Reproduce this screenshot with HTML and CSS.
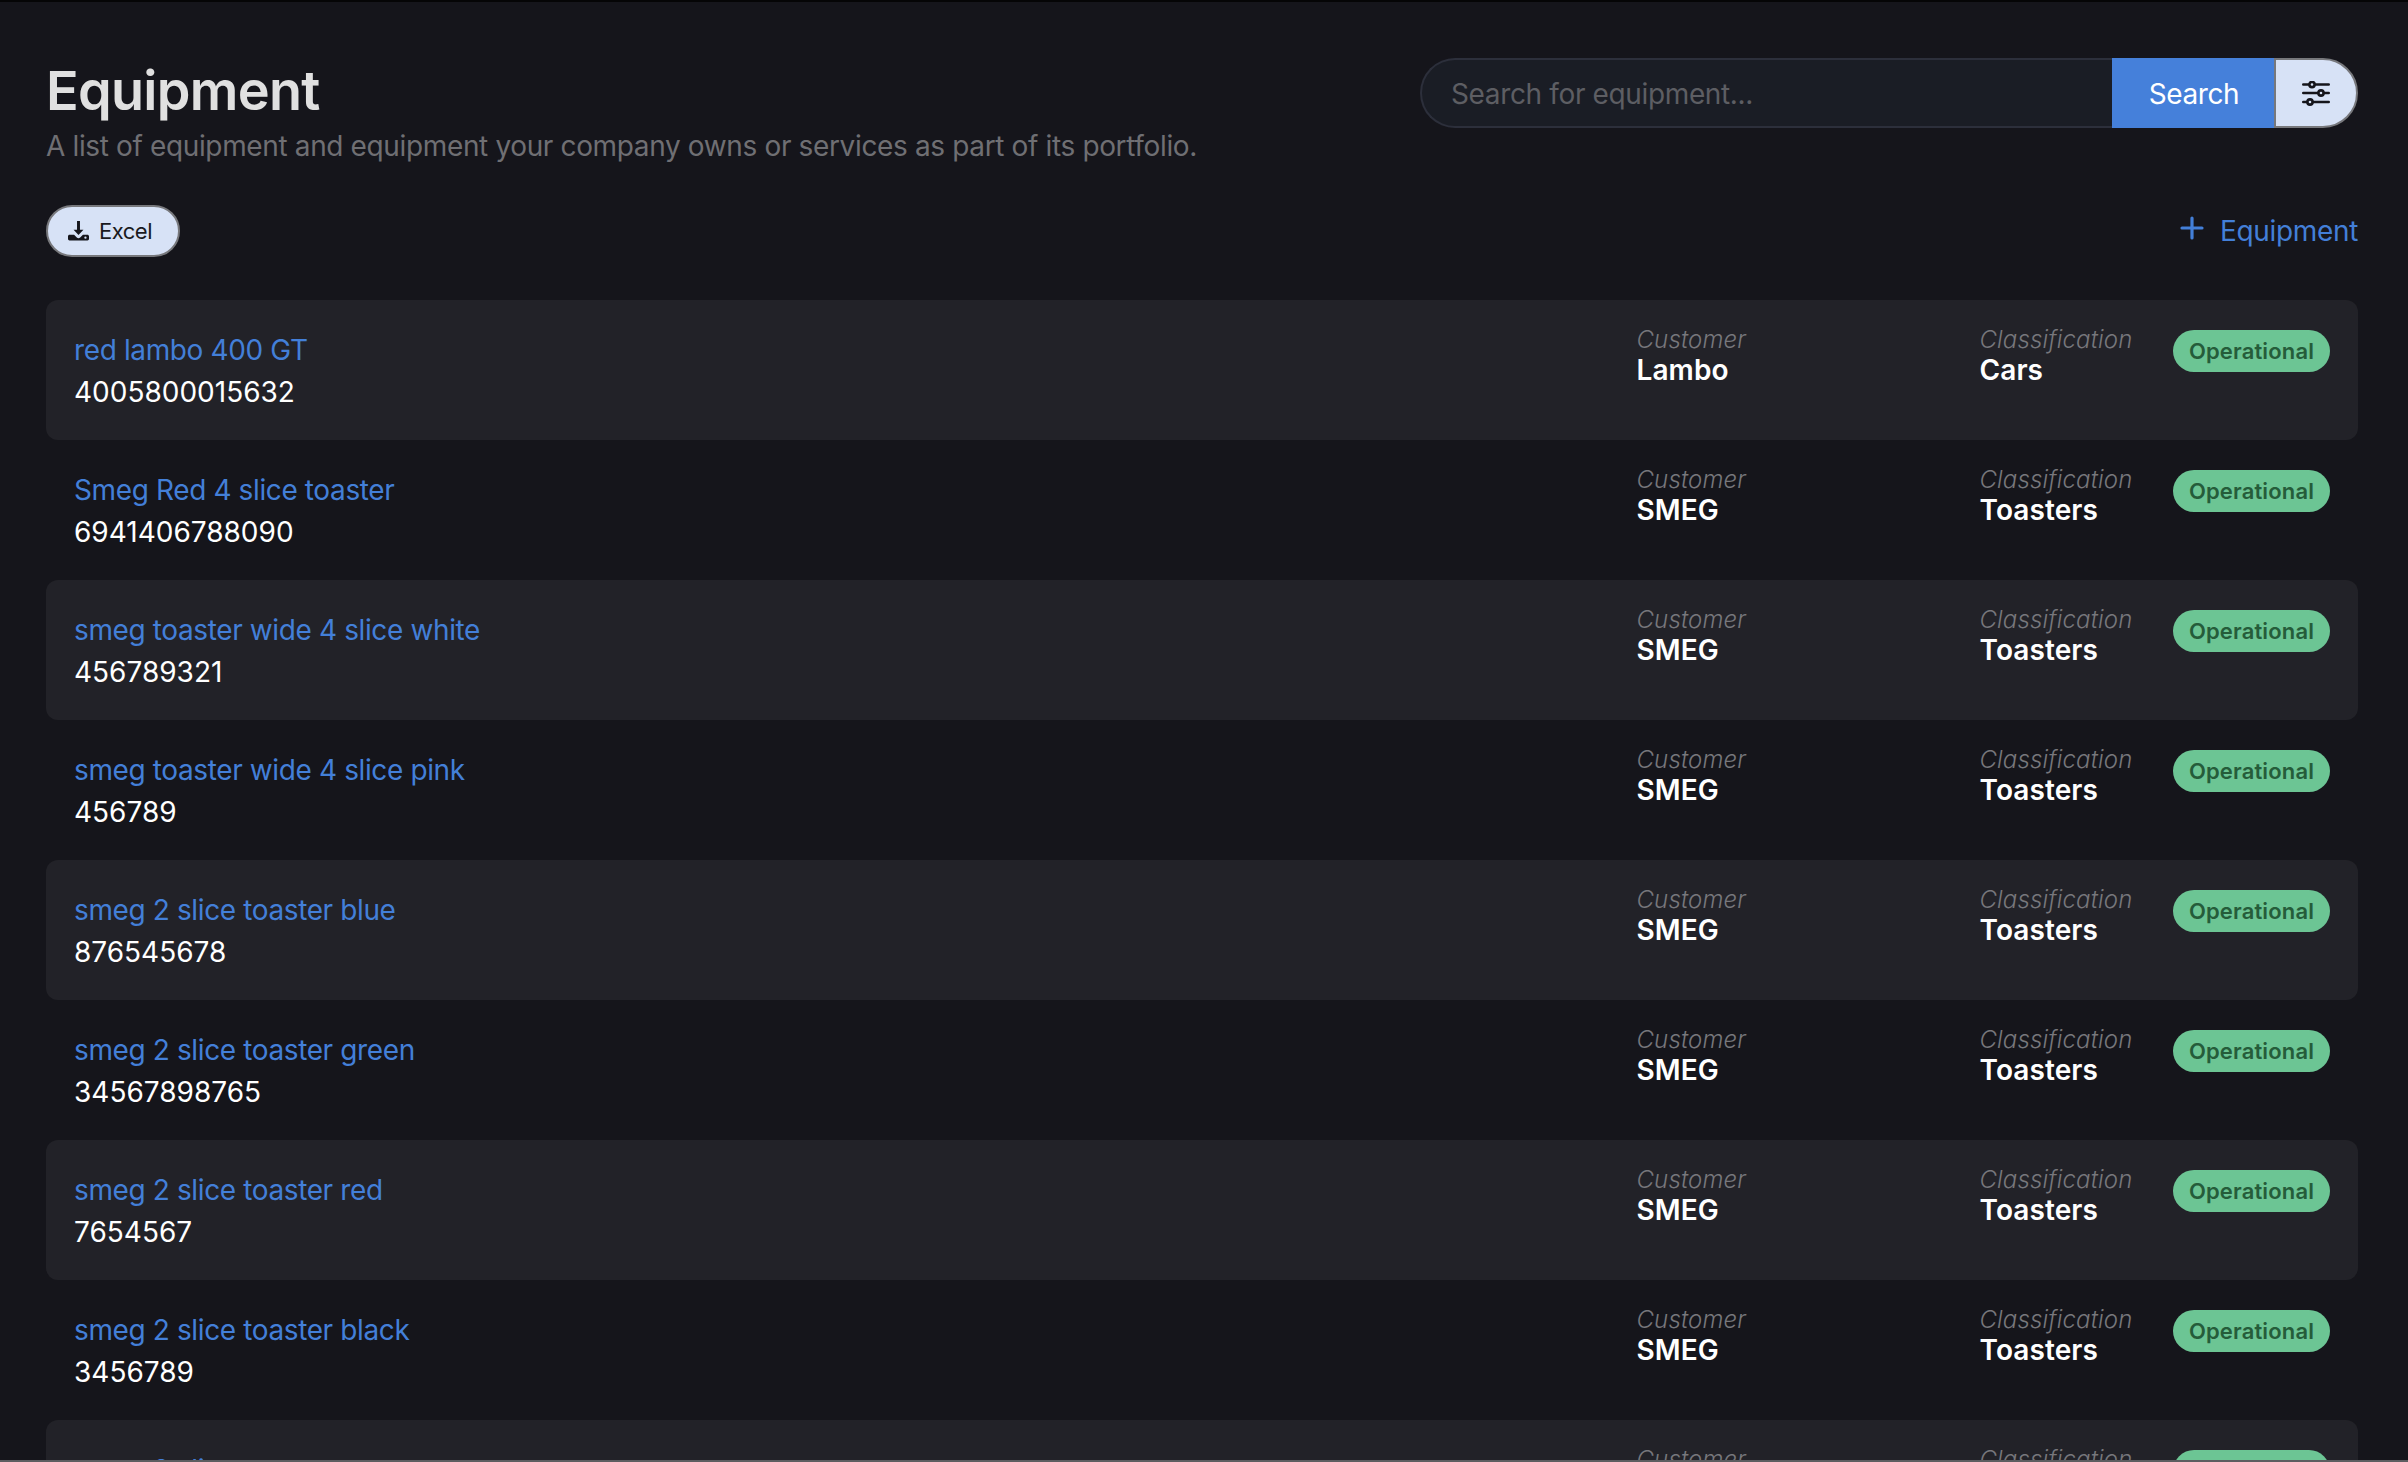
FILE: index.html
```html
<!DOCTYPE html>
<html lang="en">
<head>
<meta charset="utf-8">
<title>Equipment</title>
<link rel="stylesheet" href="styles.css">
</head>
<body>
<div class="page">
  <header class="head">
    <div class="head-text">
      <h1 class="title">Equipment</h1>
      <p class="subtitle">A list of equipment and equipment your company owns or services as part of its portfolio.</p>
    </div>
    <form class="search">
      <input class="search-input" type="text" placeholder="Search for equipment...">
      <button class="search-btn" type="button">Search</button>
      <button class="filter-btn" type="button" aria-label="Filters">
        <svg class="filter-icon" viewBox="0 0 28 25" fill="none" stroke="#15151b" stroke-width="2.6" stroke-linecap="round">
          <path d="M1.3 3.5h25.4M1.3 12h25.4M1.3 21h25.4"/>
          <circle cx="10" cy="3.5" r="2.6" fill="#d7e2f6"/>
          <circle cx="19" cy="12" r="2.6" fill="#d7e2f6"/>
          <circle cx="8" cy="21" r="2.6" fill="#d7e2f6"/>
        </svg>
      </button>
    </form>
  </header>
  <div class="tools">
    <button class="excel" type="button">
      <svg class="excel-icon" viewBox="0 0 20 20">
        <path d="M8.6 1h2.8v8.2h3.3L10 14.4 5.3 9.2h3.3z" fill="#15151b"/>
        <path d="M1.4 14h4.4l2.6 2.6a2.3 2.3 0 0 0 3.2 0L14.2 14h4.4c.6 0 1.4.6 1.4 1.4v2.8c0 .8-.7 1.4-1.4 1.4H1.4C.7 19.6 0 19 0 18.2v-2.8C0 14.6.7 14 1.4 14z" fill="#15151b"/>
        <circle cx="16.6" cy="16.8" r="1.1" fill="#d7e2f6"/>
      </svg>
      <span>Excel</span>
    </button>
    <a class="add" href="#">
      <svg class="add-icon" viewBox="0 0 24 24" fill="none" stroke="#437fd8" stroke-width="3.2" stroke-linecap="round"><path d="M12 2v20M2 12h20"/></svg>
      <span>Equipment</span>
    </a>
  </div>
  <main class="list">
    <article class="row">
      <div class="main-cell"><a class="name" href="#">red lambo 400 GT</a><div class="serial">4005800015632</div></div>
      <div class="meta customer"><div class="label">Customer</div><div class="value">Lambo</div></div>
      <div class="meta class-cell"><div class="label">Classification</div><div class="value">Cars</div></div>
      <span class="badge">Operational</span>
    </article>
    <article class="row">
      <div class="main-cell"><a class="name" href="#">Smeg Red 4 slice toaster</a><div class="serial">6941406788090</div></div>
      <div class="meta customer"><div class="label">Customer</div><div class="value">SMEG</div></div>
      <div class="meta class-cell"><div class="label">Classification</div><div class="value">Toasters</div></div>
      <span class="badge">Operational</span>
    </article>
    <article class="row">
      <div class="main-cell"><a class="name" href="#">smeg toaster wide 4 slice white</a><div class="serial">456789321</div></div>
      <div class="meta customer"><div class="label">Customer</div><div class="value">SMEG</div></div>
      <div class="meta class-cell"><div class="label">Classification</div><div class="value">Toasters</div></div>
      <span class="badge">Operational</span>
    </article>
    <article class="row">
      <div class="main-cell"><a class="name" href="#">smeg toaster wide 4 slice pink</a><div class="serial">456789</div></div>
      <div class="meta customer"><div class="label">Customer</div><div class="value">SMEG</div></div>
      <div class="meta class-cell"><div class="label">Classification</div><div class="value">Toasters</div></div>
      <span class="badge">Operational</span>
    </article>
    <article class="row">
      <div class="main-cell"><a class="name" href="#">smeg 2 slice toaster blue</a><div class="serial">876545678</div></div>
      <div class="meta customer"><div class="label">Customer</div><div class="value">SMEG</div></div>
      <div class="meta class-cell"><div class="label">Classification</div><div class="value">Toasters</div></div>
      <span class="badge">Operational</span>
    </article>
    <article class="row">
      <div class="main-cell"><a class="name" href="#">smeg 2 slice toaster green</a><div class="serial">34567898765</div></div>
      <div class="meta customer"><div class="label">Customer</div><div class="value">SMEG</div></div>
      <div class="meta class-cell"><div class="label">Classification</div><div class="value">Toasters</div></div>
      <span class="badge">Operational</span>
    </article>
    <article class="row">
      <div class="main-cell"><a class="name" href="#">smeg 2 slice toaster red</a><div class="serial">7654567</div></div>
      <div class="meta customer"><div class="label">Customer</div><div class="value">SMEG</div></div>
      <div class="meta class-cell"><div class="label">Classification</div><div class="value">Toasters</div></div>
      <span class="badge">Operational</span>
    </article>
    <article class="row">
      <div class="main-cell"><a class="name" href="#">smeg 2 slice toaster black</a><div class="serial">3456789</div></div>
      <div class="meta customer"><div class="label">Customer</div><div class="value">SMEG</div></div>
      <div class="meta class-cell"><div class="label">Classification</div><div class="value">Toasters</div></div>
      <span class="badge">Operational</span>
    </article>
    <article class="row">
      <div class="main-cell"><a class="name" href="#">smeg 2 slice toaster</a><div class="serial">3456789</div></div>
      <div class="meta customer"><div class="label">Customer</div><div class="value">SMEG</div></div>
      <div class="meta class-cell"><div class="label">Classification</div><div class="value">Toasters</div></div>
      <span class="badge">Operational</span>
    </article>
  </main>
</div>
<div class="bottom-edge"></div>
</body>
</html>
```
FILE: styles.css
```css
* { box-sizing: border-box; }
html, body { margin: 0; height: 100%; overflow: hidden; }
body {
  background: #15151b;
  font-family: Inter, "Liberation Sans", sans-serif;
  color: #fff;
}
.page {
  border-top: 2px solid #050506;
  padding: 56px 50px 0 46px;
}
.head {
  display: flex;
  justify-content: space-between;
  align-items: flex-start;
}
.title {
  margin: 0;
  font-size: 54px;
  line-height: 66px;
  font-weight: 600;
  color: #e0e0e0;
  letter-spacing: -0.7px;
}
.subtitle {
  margin: 2px 0 0;
  font-size: 28px;
  line-height: 40px;
  font-weight: 400;
  color: #6f6f73;
  letter-spacing: -0.36px;
}
.search {
  display: flex;
  height: 70px;
  width: 938px;
  margin: 0;
}
.search-input {
  flex: 1;
  min-width: 0;
  height: 70px;
  padding: 2px 30px 0 29px;
  background: #1a1d25;
  border: 2px solid #2c2f3b;
  border-right: 0;
  border-radius: 35px 0 0 35px;
  font: 400 28px Inter, "Liberation Sans", sans-serif;
  letter-spacing: -0.36px;
  color: #fff;
  outline: none;
}
.search-input::placeholder { color: #5d5e63; opacity: 1; }
.search-btn {
  width: 162px;
  height: 70px;
  padding: 2px 0 0 2px;
  border: 0;
  background: #4580da;
  color: #fff;
  font: 400 28px Inter, "Liberation Sans", sans-serif;
  letter-spacing: -0.4px;
}
.filter-btn {
  width: 84px;
  height: 70px;
  padding: 0;
  display: flex;
  align-items: center;
  justify-content: center;
  background: #d7e2f6;
  border: 2px solid #77787c;
  border-radius: 0 35px 35px 0;
}
.filter-icon { width: 28px; height: 25px; display: block; }
.tools {
  display: flex;
  justify-content: space-between;
  align-items: center;
  margin-top: 39px;
  height: 52px;
}
.excel {
  display: flex;
  align-items: center;
  gap: 10px;
  height: 52px;
  width: 134px;
  padding: 0 0 0 20px;
  background: #d7e2f6;
  border: 2px solid #77787c;
  border-radius: 26px;
  color: #1a1a20;
  font: 400 22px Inter, "Liberation Sans", sans-serif;
  letter-spacing: -0.5px;
}
.excel-icon { width: 21px; height: 21px; display: block; margin-top: -1px; }
.add {
  display: flex;
  align-items: center;
  gap: 16px;
  color: #437fd8;
  font-size: 28px;
  line-height: 40px;
  letter-spacing: -0.33px;
  text-decoration: none;
}
.add-icon { width: 24px; height: 24px; display: block; margin-top: -6px; }
.list {
  display: flex;
  flex-direction: column;
  margin-top: 43px;
}
.row {
  display: flex;
  align-items: flex-start;
  height: 140px;
  flex: none;
  padding: 25px 28px;
  border-radius: 12px;
}
.row:nth-child(odd) { background: #222228; }
.main-cell { flex: 1; padding-top: 3.5px; }
.name {
  display: block;
  color: #437fd8;
  font-size: 28px;
  line-height: 42px;
  letter-spacing: -0.38px;
  text-decoration: none;
}
.serial { font-size: 28px; line-height: 42px; color: #fff; }
.meta { flex: none; margin-left: -0.5px; margin-right: 0.5px; }
.customer { width: 343px; }
.class-cell { width: 193px; }
.label {
  font-size: 24px;
  line-height: 30px;
  font-style: italic;
  font-weight: 300;
  color: #77777c;
  letter-spacing: 0.15px;
}
.value {
  font-size: 28px;
  line-height: 30px;
  font-weight: 600;
  letter-spacing: 0.1px;
  color: #fff;
}
.badge {
  flex: none;
  width: 157px;
  height: 42px;
  margin-top: 5px;
  border-radius: 21px;
  background: #6cc594;
  color: #255c3a;
  font-size: 22px;
  line-height: 42px;
  font-weight: 600;
  letter-spacing: 0.15px;
  text-align: center;
}
.bottom-edge {
  position: fixed;
  left: 0;
  right: 0;
  bottom: 0;
  height: 2px;
  background: #5d5d60;
}
```
